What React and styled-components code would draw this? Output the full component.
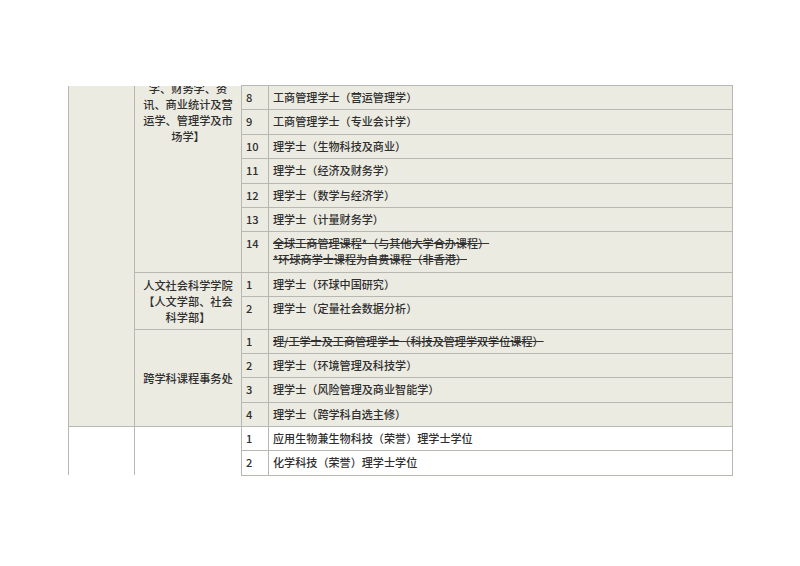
import React from "react";
import styled, { createGlobalStyle } from "styled-components";

const Global = createGlobalStyle`
  html, body { margin: 0; padding: 0; background: #ffffff; }
  body { font-family: "Noto Sans CJK SC", "Noto Sans", sans-serif; }
`;

const Page = styled.div`
  padding: 85px 0 0 68px;
`;

const Table = styled.table`
  border-collapse: collapse;
  table-layout: fixed;
  width: 665px;
  font-size: 11.1px;
  font-weight: 500;
  line-height: 16px;
  color: #2f2f2f;
`;

const Cell = styled.td`
  border: 1px solid #b8b8b2;
  background: ${(p) => (p.$white ? "#ffffff" : "#ecebe2")};
  padding: 3px 4px ${(p) => (p.$tall ? "12.4px" : "4.4px")} 4px;
  vertical-align: top;
  text-align: left;
  white-space: nowrap;
`;

const SpanCell = styled.td`
  border: 1px solid #b8b8b2;
  border-top: ${(p) => (p.$noTop ? "none" : "1px solid #b8b8b2")};
  border-bottom: ${(p) => (p.$noBottom ? "none" : "1px solid #b8b8b2")};
  background: ${(p) => (p.$white ? "#ffffff" : "#ecebe2")};
  padding: 0 5px;
  vertical-align: ${(p) => (p.$top ? "top" : "middle")};
  text-align: center;
  font-size: 11.2px;
`;

const Clip = styled.div`
  overflow: hidden;
`;

const Lines = styled.div`
  margin-top: ${(p) => p.$shift || 0}px;
`;

const Line = styled.span`
  display: block;
  white-space: nowrap;
`;

const Struck = styled.span`
  display: block;
  text-decoration: line-through;
  text-decoration-thickness: 1px;
  text-decoration-color: #333;
`;

const business = [
  ["8", "工商管理学士（营运管理学）"],
  ["9", "工商管理学士（专业会计学）"],
  ["10", "理学士（生物科技及商业）"],
  ["11", "理学士（经济及财务学）"],
  ["12", "理学士（数学与经济学）"],
  ["13", "理学士（计量财务学）"],
];

const Col = styled.col``;

export default function App() {
  return (
    <>
      <Global />
      <Page>
        <Table>
          <colgroup>
            <Col style={{ width: 66 }} />
            <Col style={{ width: 107 }} />
            <Col style={{ width: 27 }} />
            <Col />
          </colgroup>
          <tbody>
            {business.map(([n, t], i) => (
              <tr key={n}>
                {i === 0 && (
                  <>
                    <SpanCell rowSpan={13} $noTop />
                    <SpanCell rowSpan={7} $noTop $top>
                      <Clip>
                        <Lines $shift={-6}>
                          <Line>学、财务学、资</Line>
                          <Line>讯、商业统计及营</Line>
                          <Line>运学、管理学及市</Line>
                          <Line>场学】</Line>
                        </Lines>
                      </Clip>
                    </SpanCell>
                  </>
                )}
                <Cell>{n}</Cell>
                <Cell>{t}</Cell>
              </tr>
            ))}
            <tr>
              <Cell>14</Cell>
              <Cell>
                <Struck>全球工商管理课程*（与其他大学合办课程）</Struck>
                <Struck>*环球商学士课程为自费课程（非香港）</Struck>
              </Cell>
            </tr>
            <tr>
              <SpanCell rowSpan={2}>
                <Line>人文社会科学学院</Line>
                <Line>【人文学部、社会</Line>
                <Line>科学部】</Line>
              </SpanCell>
              <Cell>1</Cell>
              <Cell>理学士（环球中国研究）</Cell>
            </tr>
            <tr>
              <Cell $tall>2</Cell>
              <Cell $tall>理学士（定量社会数据分析）</Cell>
            </tr>
            <tr>
              <SpanCell rowSpan={4}>跨学科课程事务处</SpanCell>
              <Cell>1</Cell>
              <Cell>
                <Struck>理/工学士及工商管理学士（科技及管理学双学位课程）</Struck>
              </Cell>
            </tr>
            <tr>
              <Cell>2</Cell>
              <Cell>理学士（环境管理及科技学）</Cell>
            </tr>
            <tr>
              <Cell>3</Cell>
              <Cell>理学士（风险管理及商业智能学）</Cell>
            </tr>
            <tr>
              <Cell>4</Cell>
              <Cell>理学士（跨学科自选主修）</Cell>
            </tr>
            <tr>
              <SpanCell rowSpan={2} $white $noBottom />
              <SpanCell rowSpan={2} $white $noBottom />
              <Cell $white>1</Cell>
              <Cell $white>应用生物兼生物科技（荣誉）理学士学位</Cell>
            </tr>
            <tr>
              <Cell $white>2</Cell>
              <Cell $white>化学科技（荣誉）理学士学位</Cell>
            </tr>
          </tbody>
        </Table>
      </Page>
    </>
  );
}
